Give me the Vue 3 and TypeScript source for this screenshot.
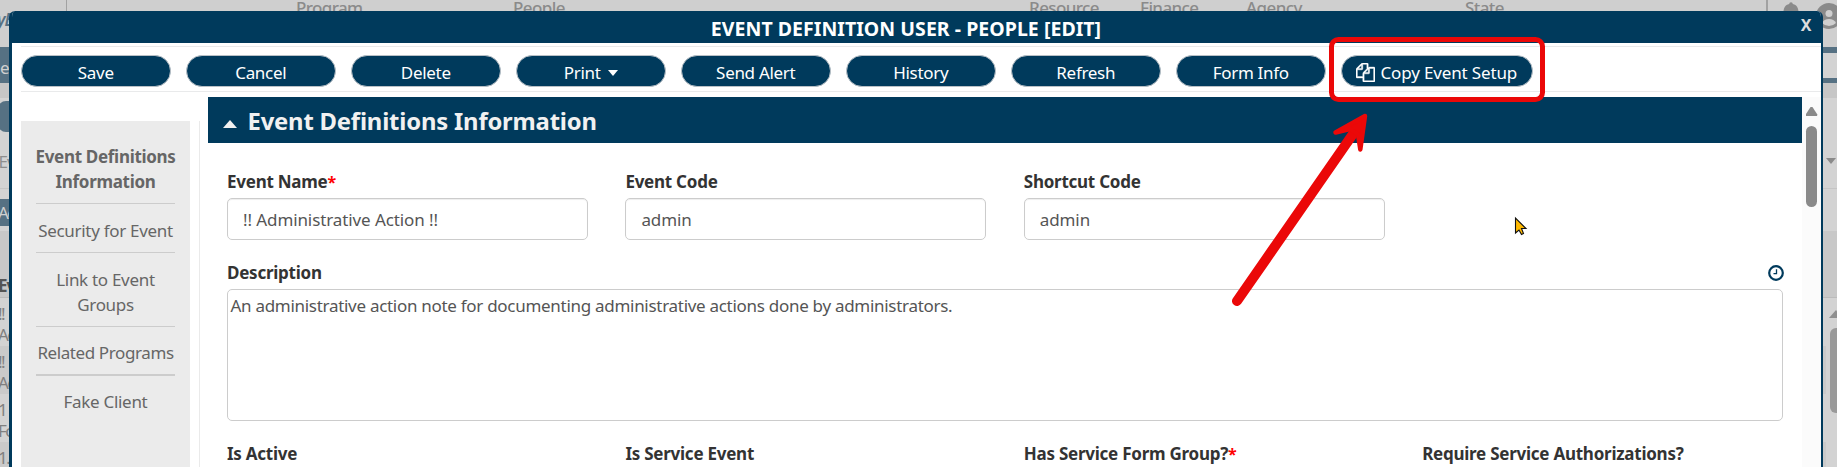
<script setup lang="ts">
interface Action { label: string; caret?: boolean; copy?: boolean }
interface Field { label: string; value: string; required?: boolean }

const actions: Action[] = [
  { label: 'Save' },
  { label: 'Cancel' },
  { label: 'Delete' },
  { label: 'Print', caret: true },
  { label: 'Send Alert' },
  { label: 'History' },
  { label: 'Refresh' },
  { label: 'Form Info' },
  { label: 'Copy Event Setup', copy: true },
]
const sections: string[][] = [
  ['Event Definitions', 'Information'],
  ['Security for Event'],
  ['Link to Event', 'Groups'],
  ['Related Programs'],
  ['Fake Client'],
]
const fields: Field[] = [
  { label: 'Event Name', value: '!! Administrative Action !!', required: true },
  { label: 'Event Code', value: 'admin' },
  { label: 'Shortcut Code', value: 'admin' },
]
const flags = [
  { label: 'Is Active' },
  { label: 'Is Service Event' },
  { label: 'Has Service Form Group?', required: true },
  { label: 'Require Service Authorizations?' },
]
const menu = [
  { label: 'Program', x: 296 },
  { label: 'People', x: 513 },
  { label: 'Resource', x: 1029 },
  { label: 'Finance', x: 1140 },
  { label: 'Agency', x: 1246 },
  { label: 'State', x: 1465 },
]
const pageRows = [['!!', 'Ac'], ['!!', 'Ac'], ['1', 'Fo'], ['1.', '']]
</script>

<template>
  <div class="screen">
    <div class="page">
      <div class="topbar">
        <span class="brand">yB</span>
        <i class="rule rule-left"></i>
        <span v-for="m in menu" :key="m.label" class="menu" :style="{ left: m.x + 'px' }">{{ m.label }}</span>
        <i class="rule rule-right"></i>
        <svg class="bell" width="18" height="16" viewBox="0 0 18 16"><path d="M7.2 2a1.8 1.8 0 0 1 3.6 0C15 3 16 6 16.500 9v7h-15V9C2 6 3 3 7.200 2z" fill="#8a8a8a" /></svg>
        <svg class="avatar" width="26" height="26" viewBox="0 0 26 26">
          <circle cx="13" cy="13" r="13" fill="#8a8a8a" />
          <circle cx="13" cy="10.500" r="3.500" fill="#cfcfcf" />
          <path d="M6 20q2-4 7-4t7 4q-3 3-7 3t-7-3z" fill="#cfcfcf" />
        </svg>
      </div>
      <div class="tab"><span>e</span><b></b></div>
      <div class="strip"></div>
      <div class="pill"></div>
      <div class="crumb">Ev<i></i></div>
      <div class="active"><span>Ac</span></div>
      <div class="columns">Ev</div>
      <div class="grid">
        <div v-for="(r, i) in pageRows" :key="i" class="grid-row">
          <div v-for="(t, j) in r" :key="j">{{ t }}</div>
        </div>
        <i class="page-up"></i>
        <i class="page-thumb"></i>
      </div>
    </div>

    <div class="modal">
      <header class="titlebar">
        <span class="title">EVENT DEFINITION USER - PEOPLE [EDIT]</span>
        <span class="close">X</span>
      </header>
      <nav class="toolbar">
        <button v-for="a in actions" :key="a.label" :class="['btn', { wide: a.copy }]">
          <svg v-if="a.copy" class="copy" viewBox="0 0 1792 1792" width="19" height="19"><path fill="#fff" stroke="#fff" stroke-width="40" d="M1696 384q40 0 68 28t28 68v1216q0 40-28 68t-68 28h-960q-40 0-68-28t-28-68v-288h-544q-40 0-68-28t-28-68v-672q0-40 20-88t48-76l408-408q28-28 76-48t88-20h416q40 0 68 28t28 68v328q68-40 128-40h416zm-544 213l-299 299h299v-299zm-640-384l-299 299h299v-299zm196 647l316-316v-416h-384v416q0 40-28 68t-68 28h-416v640h512v-256q0-40 20-88t48-76zm956 804v-1152h-384v416q0 40-28 68t-68 28h-416v640h896z" /></svg>
          <span>{{ a.label }}</span>
          <i v-if="a.caret" class="caret"></i>
        </button>
      </nav>
      <div class="body">
        <aside class="side">
          <div class="side-list">
            <div v-for="(s, i) in sections" :key="i" class="side-item">
              <div v-for="line in s" :key="line">{{ line }}</div>
            </div>
          </div>
        </aside>
        <main class="main">
          <div class="section-head"><i class="up"></i><h2>Event Definitions Information</h2></div>
          <div class="form">
            <div class="row">
              <div v-for="f in fields" :key="f.label" class="cell">
                <label class="label">{{ f.label }}<em v-if="f.required">*</em></label>
                <div class="input">{{ f.value }}</div>
              </div>
            </div>
            <div class="desc">
              <div class="desc-head">
                <label class="label">Description</label>
                <svg class="clock" width="16" height="16" viewBox="0 0 16 16"><circle cx="8" cy="8" r="6.800" fill="none" stroke="#003a5c" stroke-width="2.200" /><path d="M8.500 4.200V8.700H5.500" fill="none" stroke="#003a5c" stroke-width="1.300" /></svg>
              </div>
              <div class="textarea">An administrative action note for documenting administrative actions done by administrators.</div>
            </div>
            <div class="row flags">
              <label v-for="f in flags" :key="f.label" class="label">{{ f.label }}<em v-if="f.required">*</em></label>
            </div>
          </div>
        </main>
        <div class="scroll"><i class="scroll-up"></i><i class="thumb"></i></div>
      </div>
    </div>

    <svg class="notes" width="1837" height="467" viewBox="0 0 1837 467">
      <rect x="1331.500" y="39.500" width="211" height="60" rx="7" fill="none" stroke="#eb0808" stroke-width="5" />
      <path d="M1237 301L1353 134" stroke="#eb0808" stroke-width="10" stroke-linecap="round" />
      <path d="M1365 116L1335.500 132.500L1350 129L1358 134.500L1360.300 149.500Z" fill="#eb0808" stroke="#eb0808" stroke-width="4.500" stroke-linejoin="round" />
      <path d="M1515.500 218V233L1519 230L1521.500 234.500L1523.500 233.500L1521.500 228.500H1526Z" fill="#ffb900" stroke="#111" stroke-width="1.100" />
    </svg>
  </div>
</template>

<style>
body { margin: 0; overflow: hidden; }
</style>

<style scoped>
* { box-sizing: border-box; }
.screen { position: relative; width: 1837px; height: 467px; overflow: hidden; font: 17px/23px "Noto Sans", "Open Sans", sans-serif; letter-spacing: -0.3px; color: #555; }
.page { height: 467px; background: #d3d3d3; color: #808080; }
.topbar { position: relative; height: 47px; background: #cfcfcf; overflow: hidden; }
.brand { position: absolute; left: -3px; top: 8px; font-weight: 600; font-style: italic; color: #567183; letter-spacing: -1px; }
.rule { position: absolute; top: 0; width: 1px; height: 14px; background: #a2a2a2; }
.rule-left { left: 66px; }
.rule-right { left: 1766px; width: 2px; }
.menu { position: absolute; top: -4px; color: #8a8a8a; font-weight: 500; letter-spacing: -0.6px; }
.bell { position: absolute; left: 1782px; top: 2px; }
.avatar { position: absolute; left: 1815.500px; top: 3px; }
.tab { height: 36px; background: #567183; display: flex; justify-content: space-between; color: #d0d0d0; line-height: 41px; }
.tab b { width: 14px; height: 25px; margin-top: 6px; background: #d3d3d3; }
.strip { height: 15px; background: #c6c6c6; }
.pill { width: 20px; height: 31px; margin-top: 3px; background: #567183; border-radius: 8px 0 0 8px; margin-left: -2px; }
.crumb { position: relative; height: 57px; line-height: 59px; margin-bottom: 10px; border-bottom: 1px solid #c5c5c5; color: #8e8e8e; text-indent: -1.500px; letter-spacing: -1px; }
.crumb i { position: absolute; left: 1825.500px; top: 26px; border: 5.500px solid transparent; border-top: 6px solid #8a8a8a; border-bottom: 0; }
.active { height: 27px; width: 20px; background: #567183; color: #d0d0d0; line-height: 28px; text-indent: -2px; letter-spacing: -1.500px; }
.columns { margin-top: 5px; height: 67px; background: #c8c8c8; border-bottom: 1px solid #bbb; padding-top: 43px; color: #555; font-weight: 700; text-indent: -2px; letter-spacing: -1px; }
.grid { position: relative; overflow: hidden; height: 169px; text-indent: -2px; letter-spacing: -1.500px; }
.grid-row { height: 48px; padding: 5px 0; line-height: 21px; background: #d3d3d3; width: 1826px; }
.grid-row:nth-child(even) { background: #cacaca; }
.page-up { position: absolute; left: 1829px; top: 12px; border: 7px solid transparent; border-top: 0; border-bottom: 8px solid #8f8f8f; }
.page-thumb { position: absolute; left: 1830px; top: 30px; width: 12px; height: 85px; border-radius: 6px; background: #999; }

.modal { position: absolute; left: 9px; top: 11px; width: 1814px; height: 470px; background: #fff; border: solid #003a5c; border-width: 0 2px 0 3px; border-radius: 6px 6px 0 0; overflow: hidden; }
.titlebar { position: relative; height: 32px; padding-top: 2px; background: #003a5c; color: #fff; text-align: center; font-size: 19.500px; line-height: 32px; font-weight: 700; letter-spacing: 0.040px; }
.title { position: relative; left: -10.500px; }
.close { position: absolute; right: 9.500px; top: -2px; font-size: 16px; line-height: 32px; color: #ddd; }
.toolbar { display: flex; gap: 15.500px; height: 46px; margin: 3px 0 0 9px; padding: 8px 0 0; border-top: 1px solid #e9eaeb; border-bottom: 1px solid #e9eaeb; }
.btn { display: flex; align-items: center; justify-content: center; width: 149.500px; height: 32px; padding: 3px 0 0; border: 1px solid #b9c0c6; border-radius: 16px; background: #003a5c; color: #fff; font: inherit; letter-spacing: -0.300px; flex: none; }
.wide { width: 191.500px; gap: 5px; letter-spacing: -0.150px; }
.copy { margin-top: -1px; }
.caret { margin: 1px 0 0 7px; border: 5.500px solid transparent; border-top: 6px solid #fff; border-bottom: 0; }
.body { display: flex; height: 390px; padding-top: 5px; }
.side { width: 188px; margin: 24px 8px 0 0; padding-left: 9px; border-right: 1px solid #eaeaea; }
.side-list { width: 169px; height: 370px; padding: 9px 15px 0; background: #ebebeb; color: #666; text-align: center; line-height: 25px; white-space: nowrap; }
.side-item { display: flex; flex-direction: column; align-items: center; padding: 14px 0 9px; border-bottom: 1px solid #ccc; }
.side-item:first-child { font-weight: 700; }
.side-item:nth-child(4) { padding-top: 13px; border-bottom-width: 2px; letter-spacing: -0.400px; }
.side-item:last-child { padding-top: 13px; border: 0; }
.main { width: 1594px; }
.section-head { display: flex; align-items: center; height: 46px; padding: 2px 0 0 15px; background: #003a5c; color: #f1f1f1; }
.section-head h2 { margin: 0 0 0 10.500px; font-size: 23.800px; line-height: 44px; letter-spacing: -0.170px; }
.up { margin-top: 6px; border: 7.500px solid transparent; border-top: 0; border-bottom: 8px solid #f1f1f1; }
.form { padding: 27px 19px 0; }
.row { display: grid; grid-template-columns: repeat(4, 361px); column-gap: 37.400px; }
.cell { display: flex; flex-direction: column; gap: 5px; }
.label { height: 23px; color: #333; font-weight: 700; letter-spacing: -0.250px; white-space: nowrap; }
.label em { color: #f00; font-style: normal; font-size: 16px; line-height: 0; }
.input { height: 42px; padding: 0 15px; border: 1px solid #ccc; border-radius: 5px; line-height: 41px; box-shadow: inset 0 1px 1px rgba(0, 0, 0, .07); letter-spacing: -0.100px; }
.desc { margin-top: 21px; width: 1556px; }
.desc-head { display: flex; justify-content: space-between; align-items: center; }
.clock { margin-right: -1px; }
.textarea { height: 132px; margin-top: 5px; padding: 4px 2.500px; border: 1px solid #ccc; border-radius: 5px; letter-spacing: -0.290px; }
.flags { margin-top: 21px; }
.scroll { flex: 1; background: #fbfbfb; }
.scroll-up { display: block; width: 12px; height: 9px; margin: 10px 0 0 3.500px; background: #8a8a8a; clip-path: polygon(42% 0, 58% 0, 100% 85%, 95% 100%, 5% 100%, 0 85%); }
.thumb { display: block; width: 11px; height: 81px; margin: 10px 0 0 4px; border-radius: 6px; background: #8a8a8a; }
.notes { position: absolute; left: 0; top: 0; }
</style>
